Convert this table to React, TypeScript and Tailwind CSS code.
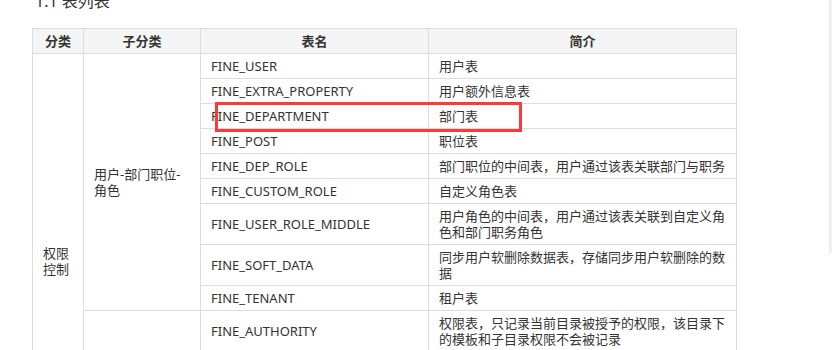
import React from "react";

type Row = { name: string; desc: string };

const group1: Row[] = [
  { name: "FINE_USER", desc: "用户表" },
  { name: "FINE_EXTRA_PROPERTY", desc: "用户额外信息表" },
  { name: "FINE_DEPARTMENT", desc: "部门表" },
  { name: "FINE_POST", desc: "职位表" },
  { name: "FINE_DEP_ROLE", desc: "部门职位的中间表，用户通过该表关联部门与职务" },
  { name: "FINE_CUSTOM_ROLE", desc: "自定义角色表" },
  { name: "FINE_USER_ROLE_MIDDLE", desc: "用户角色的中间表，用户通过该表关联到自定义角色和部门职务角色" },
  { name: "FINE_SOFT_DATA", desc: "同步用户软删除数据表，存储同步用户软删除的数据" },
  { name: "FINE_TENANT", desc: "租户表" },
];

const group2: Row[] = [
  { name: "FINE_AUTHORITY", desc: "权限表，只记录当前目录被授予的权限，该目录下的模板和子目录权限不会被记录" },
  { name: "FINE_AUTHORITY_OBJECT", desc: "权限实体表" },
  { name: "FINE_AUTH_PREFERENCE", desc: "权限偏好表" },
  { name: "FINE_AUTHORITY_GRADE", desc: "分级权限表，记录权限的分级授权信息" },
  { name: "FINE_AUTH_RANGE", desc: "权限范围表，记录各角色可管理的权限范围以及对应的权限对象" },
];

const td = "border border-[#dddddd] px-[10px] py-[4px] align-middle";

export default function App() {
  const total = group1.length + group2.length;
  return (
    <div
      className="relative w-[832px] h-[350px] overflow-hidden bg-white text-[#333333]"
      style={{ fontFamily: '"Noto Sans", "Noto Sans CJK SC", sans-serif' }}
    >
      <div className="pl-[35px] -mt-[11px] text-[16px] leading-[24px] text-[#333333]">1.1 表列表</div>
      <div className="pl-[32px] pt-[15px]">
        <table className="table-fixed border-collapse border border-[#cccccc] text-[13px] leading-[16px] w-[704px]">
          <colgroup>
            <col className="w-[51px]" />
            <col className="w-[117px]" />
            <col className="w-[228px]" />
            <col className="w-[308px]" />
          </colgroup>
          <thead>
            <tr className="bg-[#f5f5f5]">
              <th className={`${td} border-[#cccccc] text-center font-bold`}>分类</th>
              <th className={`${td} border-[#cccccc] text-center font-bold`}>子分类</th>
              <th className={`${td} border-[#cccccc] text-center font-bold`}>表名</th>
              <th className={`${td} border-[#cccccc] text-center font-bold`}>简介</th>
            </tr>
          </thead>
          <tbody>
            {group1.map((r, i) => (
              <tr key={r.name}>
                {i === 0 && (
                  <td rowSpan={total} className={td}>
                    权限控制
                  </td>
                )}
                {i === 0 && (
                  <td rowSpan={group1.length} className={td}>
                    用户-部门职位-角色
                  </td>
                )}
                <td className={td}>{r.name}</td>
                <td className={td}>{r.desc}</td>
              </tr>
            ))}
            {group2.map((r, i) => (
              <tr key={r.name}>
                {i === 0 && (
                  <td rowSpan={group2.length} className={td}>
                    权限
                  </td>
                )}
                <td className={td}>{r.name}</td>
                <td className={td}>{r.desc}</td>
              </tr>
            ))}
          </tbody>
        </table>
      </div>
      <div className="absolute left-[215px] top-[102px] w-[307px] h-[30px] border-[3px] border-[#fc3a3a]" />
      <div className="absolute right-0 top-0 w-[3px] h-[253px] bg-[#f1f1f1] border-l border-[#e8e8e8]" />
    </div>
  );
}
